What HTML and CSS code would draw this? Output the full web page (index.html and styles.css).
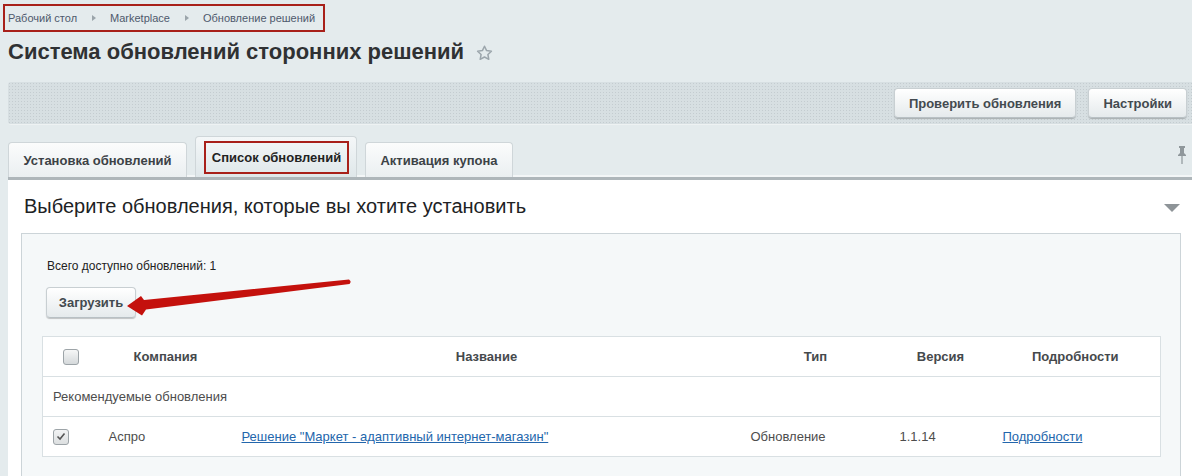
FILE: index.html
```html
<!DOCTYPE html>
<html lang="ru">
<head>
<meta charset="utf-8">
<title>Система обновлений сторонних решений</title>
<link rel="stylesheet" href="styles.css">
</head>
<body>
<div class="page">
  <nav class="crumbs">
    <a class="crumb" href="#">Рабочий стол</a><span class="sep"></span>
    <a class="crumb" href="#">Marketplace</a><span class="sep"></span>
    <a class="crumb" href="#">Обновление решений</a>
  </nav>
  <h1 class="title">Система обновлений сторонних решений
    <svg class="star" width="17" height="16" viewBox="0 0 17 16"><path d="M8.5 1.2 L10.6 5.6 L15.4 6.2 L11.9 9.5 L12.8 14.3 L8.5 12 L4.2 14.3 L5.1 9.5 L1.6 6.2 L6.4 5.6 Z" fill="none" stroke="#9ca6ac" stroke-width="1.5" stroke-linejoin="round"/></svg>
  </h1>
  <div class="toolbar">
    <button class="btn">Проверить обновления</button>
    <button class="btn">Настройки</button>
  </div>
  <div class="tabs">
    <div class="tab t1">Установка обновлений</div>
    <div class="tab active"><span class="mark">Список обновлений</span></div>
    <div class="tab t3">Активация купона</div>
    <svg class="pin" width="10" height="20" viewBox="0 0 10 20"><path d="M2 1 H8 V3 H7 V8 L9 10 V11 H1 V10 L3 8 V3 H2 Z" fill="#8f979b"/><rect x="4.4" y="11" width="1.2" height="8" fill="#8f979b"/></svg>
  </div>
  <div class="panel">
    <div class="panel-head">
      <span class="panel-title">Выберите обновления, которые вы хотите установить</span>
      <span class="collapse"></span>
    </div>
    <div class="box">
      <div class="total">Всего доступно обновлений: 1</div>
      <div class="load"><button class="btn">Загрузить</button></div>
      <table class="grid">
        <colgroup>
          <col class="c1"><col class="c2"><col class="c3"><col class="c4"><col class="c5"><col class="c6">
        </colgroup>
        <thead>
          <tr><th><span class="cb"></span></th><th>Компания</th><th>Название</th><th>Тип</th><th>Версия</th><th>Подробности</th></tr>
        </thead>
        <tbody>
          <tr><td colspan="6">Рекомендуемые обновления</td></tr>
          <tr>
            <td><span class="cb checked"><svg width="10" height="9" viewBox="0 0 10 9"><path d="M1.5 4.5 L4 7 L8.5 1.5" fill="none" stroke="#555" stroke-width="1.6"/></svg></span></td>
            <td>Аспро</td>
            <td><a href="#">Решение "Маркет - адаптивный интернет-магазин"</a></td>
            <td>Обновление</td>
            <td>1.1.14</td>
            <td><a href="#">Подробности</a></td>
          </tr>
        </tbody>
      </table>
    </div>
  </div>
  <svg class="arrow" width="1192" height="476" viewBox="0 0 1192 476">
    <path d="M127 306 L141 296 L144 300 L349 279.5 Q352 281.5 349.5 284 L146 309.5 L142 315.5 Z" fill="#c4110d"/>
  </svg>
</div>
</body>
</html>
```
FILE: styles.css
```css
* { box-sizing: border-box; }
html, body { margin: 0; padding: 0; }
body {
  background: #e4ebed;
  font-family: "Liberation Sans", Arial, sans-serif;
  color: #333;
  width: 1192px;
  height: 476px;
  overflow: hidden;
}
.page { position: relative; height: 476px; }

.crumbs {
  display: inline-flex;
  align-items: center;
  margin: 4px 0 0 3px;
  height: 28px;
  padding: 0 8px 0 3px;
  border: 2px solid #a8201a;
}
.crumb {
  font-size: 11px;
  color: #4e596c;
  text-decoration: none;
}
.sep {
  width: 0; height: 0;
  margin: 0 14px 0 15px;
  border-top: 3.5px solid transparent;
  border-bottom: 3.5px solid transparent;
  border-left: 4px solid #9ba4aa;
}

.title {
  margin: 6px 0 0 8px;
  font-size: 22px;
  line-height: 28px;
  font-weight: bold;
  color: #2f3133;
  display: flex;
  align-items: center;
}
.star { margin-left: 12px; margin-top: 1px; }

.toolbar {
  margin: 16px 0 0 8px;
  height: 43px;
  border-radius: 3px 0 0 3px;
  background-color: #d7dfe2;
  background-image: radial-gradient(circle, #c4ccd0 0.7px, transparent 0.9px);
  background-size: 3px 3px;
  border-bottom: 1px solid #eef2f3;
  display: flex;
  justify-content: flex-end;
  align-items: center;
  gap: 12px;
  padding-right: 5px;
}
.btn {
  font-family: "Liberation Sans", Arial, sans-serif;
  font-size: 13px;
  font-weight: bold;
  color: #434a4f;
  height: 30px;
  padding: 0 14px;
  border: 1px solid #c8cfd2;
  border-bottom-color: #b8c0c4;
  border-radius: 4px;
  background: linear-gradient(#ffffff, #e5eaec);
  box-shadow: 0 1px 1px rgba(0,0,0,0.22);
  white-space: nowrap;
}

.tabs {
  margin: 10px 0 0 8px;
  height: 42px;
  display: flex;
  align-items: flex-end;
  gap: 8px;
  position: relative;
}
.tab {
  height: 35px;
  display: flex;
  align-items: center;
  justify-content: center;
  white-space: nowrap;
  font-size: 13px;
  font-weight: bold;
  color: #3c4246;
  border: 1px solid #cfd6d9;
  border-bottom: none;
  border-radius: 4px 4px 0 0;
  background: linear-gradient(#fbfcfc, #eaeff1);
}
.t1 { width: 179px; }
.t3 { width: 148px; }
.tab.active {
  height: 41px;
  width: 162px;
  padding: 4px 7px 3px 8px;
  align-items: stretch;
  background: linear-gradient(#f4f7f8, #dfe7ea);
}
.mark {
  flex: 1;
  display: flex;
  align-items: center;
  justify-content: center;
  border: 2px solid #a8201a;
  color: #222;
}
.pin { position: absolute; right: 5px; top: 10px; }

.panel {
  margin-left: 8px;
  background: #fff;
  border-top: 3px solid #aeb6ba;
  box-shadow: 0 -2px 0 #f3f6f7;
  height: 300px;
}
.panel-head {
  height: 53px;
  display: flex;
  align-items: center;
  justify-content: space-between;
  padding: 0 12px 0 16px;
}
.panel-title {
  font-size: 20px;
  color: #202224;
}
.collapse {
  width: 0; height: 0;
  border-left: 8.5px solid transparent;
  border-right: 8.5px solid transparent;
  border-top: 8px solid #8e9498;
  margin-top: 2px;
}

.box {
  margin: 0 11px 0 13px;
  border: 1px solid #ccd4d8;
  background: #f5f8f9;
  height: 260px;
  padding: 24px 20px 0 20px;
}
.total {
  font-size: 12px;
  line-height: 16px;
  color: #222;
  padding-left: 5px;
}
.load { margin-top: 13px; padding-left: 4px; }
.load .btn { height: 31px; width: 90px; padding: 0; }

.grid {
  margin-top: 18px;
  width: 1118px;
  table-layout: fixed;
  border-collapse: collapse;
  background: #fff;
  border: 1px solid #d9e0e3;
  font-size: 13px;
}
.c1 { width: 56px; }
.c2 { width: 134px; }
.c3 { width: 508px; }
.c4 { width: 150px; }
.c5 { width: 100px; }
.c6 { width: 170px; }
.grid tr { height: 40px; }
.grid th {
  font-weight: bold;
  color: #45494c;
  text-align: center;
  padding: 0;
}
.grid td {
  color: #4d4d4d;
  padding: 0 0 0 10px;
  border-top: 1px solid #d9e0e3;
}
.grid td:nth-child(3) { padding-left: 9px; }
.grid td:nth-child(5) { padding-left: 9px; }
.grid td:nth-child(6) { padding-left: 12px; }
.grid a { color: #2366ac; text-decoration: underline; }
.cb {
  display: inline-flex;
  align-items: center;
  justify-content: center;
  width: 16px;
  height: 16px;
  border: 1px solid #9da4a8;
  border-radius: 3px;
  background: linear-gradient(#f6f7f7, #d5d9db);
  vertical-align: middle;
}
th .cb { margin-left: 1px; }
.cb.checked { background: linear-gradient(#f2f3f4, #dcdfe0); }

.arrow { position: absolute; left: 0; top: 0; pointer-events: none; }
```
